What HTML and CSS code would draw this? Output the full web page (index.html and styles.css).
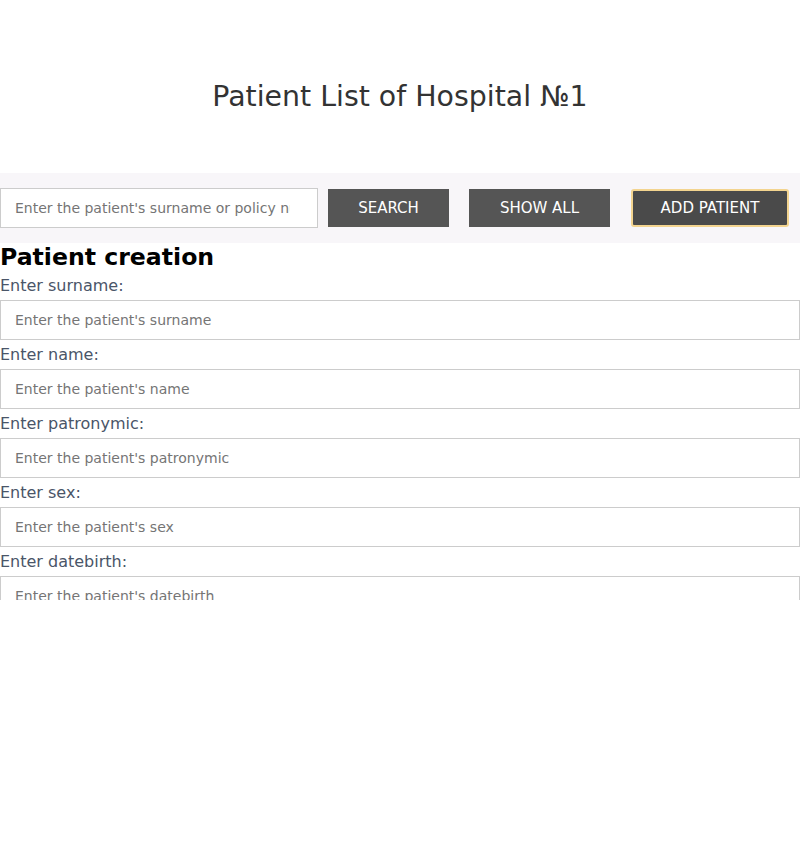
FILE: index.html
```html
<!DOCTYPE html>
<html>
<head>
<meta charset="utf-8">
<link rel="stylesheet" href="styles.css">
</head>
<body>
<div class="app">
  <header class="header">
    <h1 class="title">Patient List of Hospital №1</h1>
  </header>
  <div class="toolbar">
    <input class="search" type="text" placeholder="Enter the patient's surname or policy number">
    <button class="btn btn-search">SEARCH</button>
    <button class="btn btn-all">SHOW ALL</button>
    <button class="btn btn-add">ADD PATIENT</button>
  </div>
  <form class="form">
    <h2 class="form-title">Patient creation</h2>
    <label class="label">Enter surname:</label>
    <input class="field" type="text" placeholder="Enter the patient's surname">
    <label class="label">Enter name:</label>
    <input class="field" type="text" placeholder="Enter the patient's name">
    <label class="label">Enter patronymic:</label>
    <input class="field" type="text" placeholder="Enter the patient's patronymic">
    <label class="label">Enter sex:</label>
    <input class="field" type="text" placeholder="Enter the patient's sex">
    <label class="label">Enter datebirth:</label>
    <input class="field" type="text" placeholder="Enter the patient's datebirth">
  </form>
</div>
</body>
</html>
```
FILE: styles.css
```css
* { box-sizing: border-box; }
html, body { margin: 0; padding: 0; background: #fff; }
body { font-family: "DejaVu Sans", sans-serif; }
.app { height: 600px; overflow: hidden; }
.header { height: 173px; padding-top: 83px; text-align: center; }
.title { margin: 0; font-weight: normal; font-size: 28.4px; color: #333; line-height: 28px; }
.toolbar { height: 70px; background: #f8f6f9; display: flex; align-items: center; }
.search {
  width: 318px; height: 40px; border: 1px solid #ccc; padding: 0 27px 0 14px;
  font-family: "DejaVu Sans", sans-serif; font-size: 14px; color: #333; background: #fff;
}
.search::placeholder, .field::placeholder { color: #757575; }
.btn {
  height: 38px; border: none; background: #555; color: #fff;
  font-family: "DejaVu Sans", sans-serif; font-size: 15px; padding: 0; cursor: pointer;
}
.btn-search { width: 121px; margin-left: 10px; }
.btn-all { width: 141px; margin-left: 20px; }
.btn-add { width: 158px; margin-left: 21px; background: #4a4a4a; border: 2px solid #f3d48f; border-radius: 3px; }
.form { display: flex; flex-direction: column; }
.form-title { margin: 0; font-size: 23.6px; font-weight: bold; line-height: 28px; color: #000; }
.label { font-size: 16px; line-height: 29px; color: #4a5568; }
.field {
  width: 100%; height: 40px; border: 1px solid #ccc; padding: 0 14px;
  font-family: "DejaVu Sans", sans-serif; font-size: 14px; color: #333; background: #fff;
}
```
